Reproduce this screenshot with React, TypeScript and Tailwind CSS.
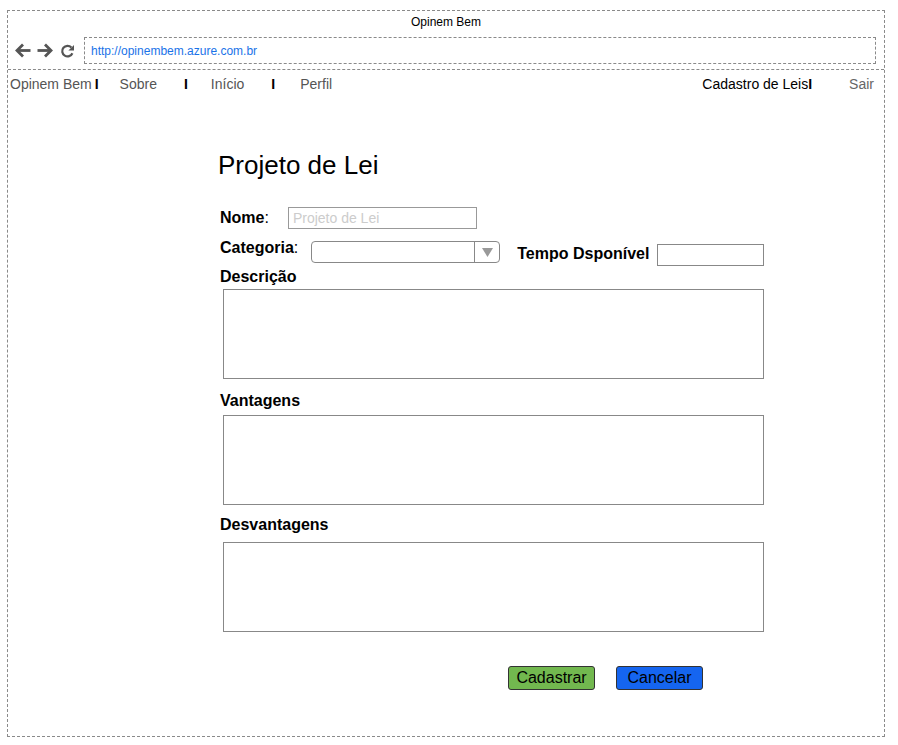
import React from 'react'

function ArrowLeft() {
  return (
    <svg width="17" height="15" viewBox="0 0 17 15" fill="none" stroke="#555" strokeWidth="2.8" strokeLinejoin="miter">
      <path d="M16.5 7.5H3" />
      <path d="M9 1.5L3 7.5L9 13.5" />
    </svg>
  )
}

function ArrowRight() {
  return (
    <svg width="17" height="15" viewBox="0 0 17 15" fill="none" stroke="#555" strokeWidth="2.8" strokeLinejoin="miter">
      <path d="M0.5 7.5H14" />
      <path d="M8 1.5L14 7.5L8 13.5" />
    </svg>
  )
}

function Reload() {
  return (
    <svg width="15" height="15" viewBox="0 0 15 15" fill="none">
      <path d="M12.4 9.2A5.3 5.3 0 1 1 11.4 3.5" stroke="#555" strokeWidth="2.2" />
      <path d="M14 1V6.6H8.4Z" fill="#555" />
    </svg>
  )
}

function Sep() {
  return <span className="font-bold text-black">I</span>
}

function Area() {
  return <div className="ml-[5px] h-[90px] w-[541px] border border-[#888] bg-white" />
}

export default function App() {
  return (
    <div className="h-[745px] w-[898px] bg-white pt-[10px] pl-[7px] font-['Liberation_Sans',Arial,sans-serif] text-black">
      <div className="flex h-[727px] w-[878px] flex-col border border-dashed border-[#8a8a8a]">
        <header className="h-[59px] border-b border-dashed border-[#8a8a8a]">
          <div className="h-[22px] text-center text-[12px] leading-[22px]">Opinem Bem</div>
          <div className="mt-[4px] flex h-[27px] items-center pl-[6px]">
            <ArrowLeft />
            <span className="ml-[6px]"><ArrowRight /></span>
            <span className="ml-[6px] mt-[1px]"><Reload /></span>
            <div className="ml-[9px] flex h-[27px] w-[792px] items-center border border-dashed border-[#8a8a8a] pl-[6px] text-[12px] text-[#1a73e8]">
              http://opinembem.azure.com.br
            </div>
          </div>
        </header>

        <nav className="flex pt-[4px] text-[14px] leading-[20px]">
          <span className="ml-[2px] text-[#555]">Opinem Bem</span>
          <span className="ml-[3px]"><Sep /></span>
          <span className="ml-[21px] text-[#555]">Sobre</span>
          <span className="ml-[27px]"><Sep /></span>
          <span className="ml-[23px] text-[#555]">Início</span>
          <span className="ml-[27px]"><Sep /></span>
          <span className="ml-[25px] text-[#555]">Perfil</span>
          <div className="ml-auto mr-[10px] flex">
            <span>Cadastro de Leis</span>
            <Sep />
            <span className="ml-[37px] text-[#666]">Sair</span>
          </div>
        </nav>

        <main className="flex flex-col pl-[210px]">
          <h1 className="mt-[56px] text-[26px] leading-[30px]">Projeto de Lei</h1>

          <div className="mt-[27px] flex h-[22px] items-center">
            <span className="ml-[2px] text-[16px] font-bold">Nome</span>
            <span className="text-[16px]">:</span>
            <div className="ml-[19px] flex h-[22px] w-[189px] items-center border border-[#999] pl-[4px] text-[14px] text-[#ccc]">
              Projeto de Lei
            </div>
          </div>

          <div className="mt-[9px] flex items-start">
            <span className="ml-[2px] mt-[1px] text-[16px] font-bold leading-[18px]">Categoria</span>
            <span className="mt-[1px] text-[16px] leading-[18px]">:</span>
            <div className="ml-[13px] mt-[3px] flex h-[22px] w-[189px] justify-end rounded-[4px] border border-[#888]">
              <div className="flex w-[25px] items-center justify-center border-l border-[#888]">
                <svg width="11" height="9" viewBox="0 0 11 9">
                  <path d="M0 0H11L5.5 9Z" fill="#999" />
                </svg>
              </div>
            </div>
            <span className="ml-[17px] mt-[7px] text-[16px] font-bold leading-[18px]">Tempo Dsponível</span>
            <div className="ml-[8px] mt-[6px] h-[22px] w-[107px] border border-[#888]" />
          </div>

          <span className="mt-[2px] ml-[2px] text-[16px] font-bold leading-[18px]">Descrição</span>
          <div className="mt-[3px]"><Area /></div>

          <span className="mt-[13px] ml-[2px] text-[16px] font-bold leading-[18px]">Vantagens</span>
          <div className="mt-[5px]"><Area /></div>

          <span className="mt-[11px] ml-[2px] text-[16px] font-bold leading-[18px]">Desvantagens</span>
          <div className="mt-[8px]"><Area /></div>

          <div className="mt-[34px] ml-[290px] flex gap-[21px]">
            <button className="h-[24px] w-[87px] rounded-[3px] border border-[#333] bg-[#72b84f] text-[16px] leading-[22px] text-black">
              Cadastrar
            </button>
            <button className="h-[24px] w-[87px] rounded-[3px] border border-[#333] bg-[#1565f0] text-[16px] leading-[22px] text-black">
              Cancelar
            </button>
          </div>
        </main>
      </div>
    </div>
  )
}
